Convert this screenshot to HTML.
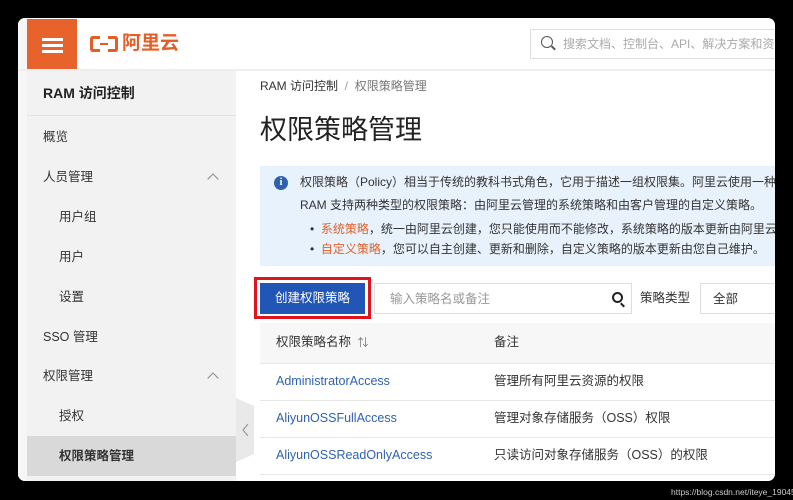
<!DOCTYPE html>
<html><head><meta charset="utf-8"><style>
*{margin:0;padding:0;box-sizing:border-box}
body{width:793px;height:500px;background:#000;position:relative;overflow:hidden;font-family:"Liberation Sans","Noto Sans CJK SC",sans-serif;color:#333}
.a{position:absolute;white-space:nowrap;line-height:16px}
#win{position:absolute;left:18px;top:18px;width:757px;height:463px;background:#fff;border-radius:7px;overflow:hidden}
.side{font-size:12.5px;color:#333}
.chev{position:absolute;width:8px;height:8px;border-left:1.3px solid #888;border-top:1.3px solid #888;transform:rotate(45deg)}
.row{position:absolute;left:242px;width:515px;height:1px;background:#e6e6e6}
.lnk{color:#2f62ad;font-size:12.5px}
.cell{font-size:12.5px;color:#333}
</style></head><body>
<div id="win">
  <div class="a" style="left:0;top:0;width:9px;height:463px;background:#f6f6f6"></div>
  <div class="a" style="left:9px;top:1px;width:50px;height:50px;background:#e8622b"></div>
  <div class="a" style="left:24px;top:20px;width:21px;height:3px;background:#fff"></div>
  <div class="a" style="left:24px;top:26px;width:21px;height:3px;background:#fff"></div>
  <div class="a" style="left:24px;top:32px;width:21px;height:3px;background:#fff"></div>
  <div class="a" style="left:72px;top:18px;width:10px;height:16px;border:3px solid #e35f27;border-right:none;border-radius:3px 0 0 3px"></div>
  <div class="a" style="left:82px;top:25px;width:8px;height:2px;background:#e35f27"></div>
  <div class="a" style="left:90px;top:18px;width:10px;height:16px;border:3px solid #e35f27;border-left:none;border-radius:0 3px 3px 0"></div>
  <div class="a" style="left:104px;top:14px;font-size:19px;line-height:24px;font-weight:bold;color:#e35f27">阿里云</div>
  <div class="a" style="left:512px;top:11px;width:250px;height:30px;border:1px solid #ddd"></div>
  <div class="a" style="left:523px;top:18px;width:12px;height:12px;border:1.5px solid #555;border-radius:50%"></div>
  <div class="a" style="left:533px;top:29px;width:5px;height:1.5px;background:#555;transform:rotate(45deg)"></div>
  <div class="a" style="left:545px;top:18px;font-size:12px;color:#aaa">搜索文档、控制台、API、解决方案和资源</div>
  <div class="a" style="left:0;top:51px;width:757px;height:2px;background:#eee"></div>
  <div class="a" style="left:9px;top:53px;width:209px;height:410px;background:#f2f2f2"></div>
  <div class="a" style="left:9px;top:97px;width:209px;height:1px;background:#e3e3e3"></div>
  <div class="a" style="left:25px;top:67px;font-size:14px;font-weight:bold;color:#222">RAM 访问控制</div>
  <div class="a side" style="left:25px;top:111px">概览</div>
  <div class="a side" style="left:25px;top:151px">人员管理</div>
  <div class="chev" style="left:191px;top:157px"></div>
  <div class="a side" style="left:41px;top:191px">用户组</div>
  <div class="a side" style="left:41px;top:231px">用户</div>
  <div class="a side" style="left:41px;top:271px">设置</div>
  <div class="a side" style="left:25px;top:311px">SSO 管理</div>
  <div class="a side" style="left:25px;top:350px">权限管理</div>
  <div class="chev" style="left:191px;top:356px"></div>
  <div class="a side" style="left:41px;top:390px">授权</div>
  <div class="a" style="left:9px;top:418px;width:209px;height:40px;background:#d9d9d9"></div>
  <div class="a side" style="left:41px;top:430px;font-weight:bold">权限策略管理</div>
  <svg class="a" style="left:218px;top:380px" width="20" height="64"><path d="M0 0 L18 8 L18 56 L0 64Z" fill="#e9e9e9"/><path d="M12 26 L7 32 L12 38" stroke="#999" stroke-width="1.2" fill="none"/></svg>
  <div class="a" style="left:242px;top:60px;font-size:12px;color:#333">RAM 访问控制 <span style="color:#999">&nbsp;/&nbsp;</span> <span style="color:#777">权限策略管理</span></div>
  <div class="a" style="left:242px;top:96px;font-size:27px;line-height:32px;color:#222">权限策略管理</div>
  <div class="a" style="left:242px;top:148px;width:515px;height:100px;background:#e8f2fc"></div>
  <div class="a" style="left:256px;top:158px;width:14px;height:14px;border-radius:50%;background:#2f62ad;color:#fff;font-size:10px;font-weight:bold;text-align:center;line-height:14px;font-family:'Liberation Serif',serif">i</div>
  <div class="a" style="left:282px;top:156px;font-size:12px;color:#333">权限策略（Policy）相当于传统的教科书式角色，它用于描述一组权限集。阿里云使用一种</div>
  <div class="a" style="left:282px;top:179px;font-size:12px;color:#333">RAM 支持两种类型的权限策略：由阿里云管理的系统策略和由客户管理的自定义策略。</div>
  <div class="a" style="left:292px;top:203px;font-size:12px;color:#333">•&nbsp; <span style="color:#e35f27">系统策略</span>，统一由阿里云创建，您只能使用而不能修改，系统策略的版本更新由阿里云</div>
  <div class="a" style="left:292px;top:223px;font-size:12px;color:#333">•&nbsp; <span style="color:#e35f27">自定义策略</span>，您可以自主创建、更新和删除，自定义策略的版本更新由您自己维护。</div>
  <div class="a" style="left:236px;top:259px;width:117px;height:42px;border:3px solid #e0141e"></div>
  <div class="a" style="left:242px;top:265px;width:105px;height:31px;background:#2155b6;color:#fff;font-size:12.5px;text-align:center;line-height:31px">创建权限策略</div>
  <div class="a" style="left:356px;top:265px;width:258px;height:31px;border:1px solid #ddd"></div>
  <div class="a" style="left:372px;top:273px;font-size:12.5px;color:#999">输入策略名或备注</div>
  <div class="a" style="left:594px;top:274px;width:11px;height:11px;border:2px solid #222;border-radius:50%"></div>
  <div class="a" style="left:602px;top:286px;width:5px;height:2px;background:#222;transform:rotate(45deg)"></div>
  <div class="a" style="left:622px;top:272px;font-size:12.5px;color:#333">策略类型</div>
  <div class="a" style="left:682px;top:265px;width:90px;height:31px;border:1px solid #ddd"></div>
  <div class="a" style="left:695px;top:273px;font-size:12.5px;color:#333">全部</div>
  <div class="a" style="left:242px;top:305px;width:515px;height:40px;background:#f7f7f7"></div>
  <div class="a cell" style="left:258px;top:316px">权限策略名称 <span style="color:#777;font-size:11px">&nbsp;⇅</span></div>
  <div class="a cell" style="left:476px;top:316px">备注</div>
  <div class="row" style="top:345px"></div>
  <div class="a lnk" style="left:258px;top:355px">AdministratorAccess</div>
  <div class="a cell" style="left:476px;top:355px">管理所有阿里云资源的权限</div>
  <div class="row" style="top:382px"></div>
  <div class="a lnk" style="left:258px;top:392px">AliyunOSSFullAccess</div>
  <div class="a cell" style="left:476px;top:392px">管理对象存储服务（OSS）权限</div>
  <div class="row" style="top:419px"></div>
  <div class="a lnk" style="left:258px;top:429px">AliyunOSSReadOnlyAccess</div>
  <div class="a cell" style="left:476px;top:429px">只读访问对象存储服务（OSS）的权限</div>
  <div class="row" style="top:456px"></div>
</div>
<div class="a" style="left:671px;top:484px;font-size:8.5px;color:#ccc">https://blog.csdn.net/iteye_19045</div>
</body></html>
